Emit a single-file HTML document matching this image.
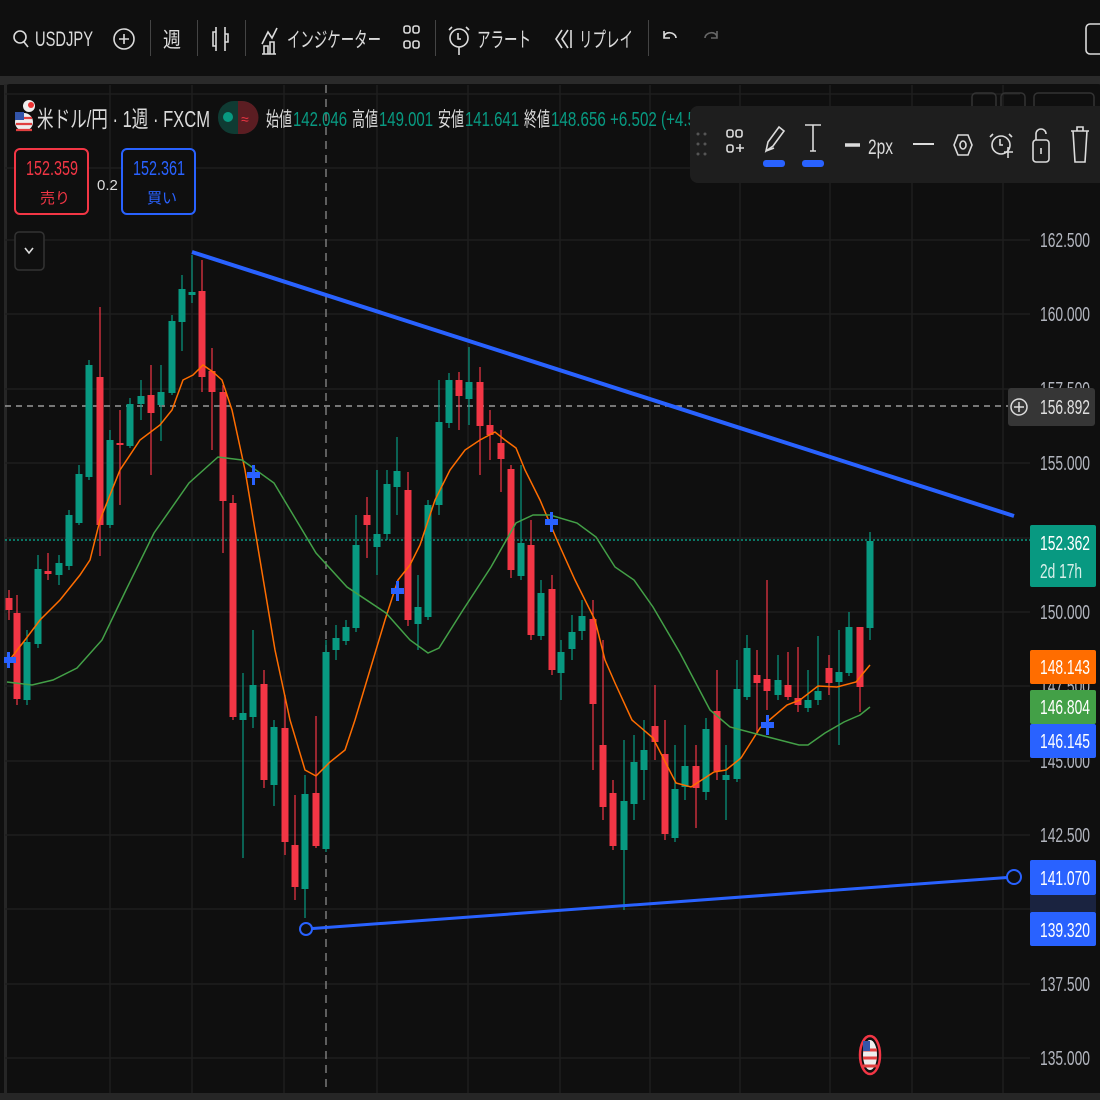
<!DOCTYPE html>
<html><head><meta charset="utf-8"><style>
html,body{margin:0;padding:0;background:#0f0f0f;width:1100px;height:1100px;overflow:hidden}
svg{display:block}
text{font-family:"Liberation Sans","Noto Sans CJK JP",sans-serif}
</style></head><body>
<svg width="1100" height="1100" viewBox="0 0 1100 1100" xmlns="http://www.w3.org/2000/svg">
<rect width="1100" height="1100" fill="#0f0f0f"/>
<!-- top toolbar -->
<g fill="none" stroke="#dbdbdb" stroke-width="1.6">
<circle cx="20" cy="37" r="6"/><path d="M24 42l4 5"/>
<circle cx="124" cy="39" r="10"/><path d="M119 39h10M124 34v10"/>
<path d="M216 27v24M216 32h-3v14h3M225 27v24M225 34h3v8h-3"/>
<path d="M262 54h14M264 54v-8h4v8M270 54v-12h4v12M262 44l6-12 4 6 5-10"/>
<rect x="404" y="26" width="6" height="7" rx="2"/><rect x="413" y="26" width="6" height="7" rx="2"/><rect x="404" y="41" width="6" height="7" rx="2"/><rect x="413" y="41" width="6" height="7" rx="2"/>
<circle cx="459" cy="38" r="9"/><path d="M458 33v6h3M452 27l-3 3M466 27l3 3M459 47v8"/>
<path d="M562 30l-6 9 6 9M568 30l-6 9 6 9M571 30v18"/>
<path d="M676 38c0-6-12-8-12 0M664 31v7h6"/>
<path d="M705 38c0-6 12-8 12 0M717 31v7h-6" stroke="#666"/>
<rect x="1086" y="24" width="20" height="30" rx="4"/>
</g>
<g fill="#444"><rect x="150" y="20" width="1" height="36"/><rect x="197" y="20" width="1" height="36"/><rect x="245" y="20" width="1" height="36"/><rect x="435" y="20" width="1" height="36"/><rect x="648" y="20" width="1" height="36"/></g>
<g fill="#dbdbdb" font-size="21">
<text x="35" y="46" textLength="58" lengthAdjust="spacingAndGlyphs">USDJPY</text>
<text x="163" y="47" textLength="18" lengthAdjust="spacingAndGlyphs">週</text>
<text x="287" y="47" textLength="94" lengthAdjust="spacingAndGlyphs">インジケーター</text>
<text x="477" y="47" textLength="54" lengthAdjust="spacingAndGlyphs">アラート</text>
<text x="579" y="47" textLength="54" lengthAdjust="spacingAndGlyphs">リプレイ</text>
</g>
<!-- band -->
<rect x="0" y="76" width="1100" height="9" fill="#2a2a2a"/>
<rect x="4" y="84" width="1100" height="1010" rx="6" fill="#0f0f0f"/>
<rect x="4" y="84" width="3" height="1010" fill="#262626"/>
<rect x="0" y="1093" width="1100" height="7" fill="#262626"/>
<!-- grid -->
<g stroke="#1e1e1e" stroke-width="1.5">
<path d="M5 94H1020M5 168H1020M5 240H1030M5 314H1030M5 389H1030M5 463H1030M5 538H1030M5 612H1030M5 686H1030M5 761H1030M5 835H1030M5 909H1030M5 984H1030M5 1058H1030"/>
<path d="M110 85V1093M192 85V1093M284 85V1093M377 85V1093M468 85V1093M560 85V1093M650 85V1093M740 85V1093M830 85V1093M912 85V1093M1003 85V1093"/>
</g>
<path d="M326 85V1093" stroke="#8a8a8a" stroke-width="1.3" stroke-dasharray="8,6"/>
<path d="M5 406H1010" stroke="#9a9a9a" stroke-width="1.5" stroke-dasharray="6,5"/>
<path d="M5 540H1030" stroke="#089981" stroke-width="1.5" stroke-dasharray="2,2"/>
<!-- candles -->
<g stroke="#089981" stroke-width="1.2" fill="#089981">
<path d="M27 630V705M38 555V648M59 555V585M69 510V570M79 465V525M89 360V480M110 430V528M130 398V448M141 380V420M161 365V441M172 315V395M182 275V351M192 255V303M243 673V858M253 630V728M274 720V806M305 775V918M326 640V852M336 625V660M346 620V645M356 515V632M377 470V575M387 470V540M397 437V515M418 575V650M428 500V620M439 380V515M449 373V428M469 347V425M521 465V580M541 580V640M561 640V700M572 615V660M582 600V640M624 740V910M634 735V820M644 720V800M675 745V842M685 725V800M706 718V800M726 745V820M737 660V782M747 635V700M778 655V700M808 670V712M818 636V705M839 630V745M849 612V676M870 532V640"/>
<g stroke="none">
<rect x="23.5" y="642" width="7" height="58"/><rect x="34.5" y="569" width="7" height="75"/><rect x="55.5" y="563" width="7" height="12"/><rect x="65.5" y="515" width="7" height="51"/><rect x="75.5" y="474" width="7" height="49"/><rect x="85.5" y="365" width="7" height="112"/><rect x="106.5" y="440" width="7" height="85"/><rect x="126.5" y="404" width="7" height="42"/><rect x="137.5" y="396" width="7" height="8"/><rect x="157.5" y="392" width="7" height="13"/><rect x="168.5" y="321" width="7" height="72"/><rect x="178.5" y="289" width="7" height="33"/><rect x="188.5" y="292" width="7" height="3"/><rect x="239.5" y="713" width="7" height="7"/><rect x="249.5" y="685" width="7" height="32"/><rect x="270.5" y="727" width="7" height="58"/><rect x="301.5" y="794" width="7" height="95"/><rect x="322.5" y="652" width="7" height="197"/><rect x="332.5" y="638" width="7" height="12"/><rect x="342.5" y="627" width="7" height="14"/><rect x="352.5" y="545" width="7" height="83"/><rect x="373.5" y="534" width="7" height="13"/><rect x="383.5" y="484" width="7" height="50"/><rect x="393.5" y="471" width="7" height="16"/><rect x="414.5" y="607" width="7" height="17"/><rect x="424.5" y="505" width="7" height="112"/><rect x="435.5" y="422" width="7" height="83"/><rect x="445.5" y="380" width="7" height="43"/><rect x="465.5" y="382" width="7" height="17"/><rect x="517.5" y="543" width="7" height="33"/><rect x="537.5" y="593" width="7" height="43"/><rect x="557.5" y="652" width="7" height="21"/><rect x="568.5" y="632" width="7" height="17"/><rect x="578.5" y="616" width="7" height="15"/><rect x="620.5" y="801" width="7" height="49"/><rect x="630.5" y="762" width="7" height="42"/><rect x="640.5" y="750" width="7" height="20"/><rect x="671.5" y="789" width="7" height="49"/><rect x="681.5" y="766" width="7" height="21"/><rect x="702.5" y="729" width="7" height="63"/><rect x="722.5" y="775" width="7" height="5"/><rect x="733.5" y="689" width="7" height="90"/><rect x="743.5" y="648" width="7" height="49"/><rect x="774.5" y="680" width="7" height="15"/><rect x="804.5" y="700" width="7" height="8"/><rect x="814.5" y="691" width="7" height="9"/><rect x="835.5" y="672" width="7" height="10"/><rect x="845.5" y="627" width="7" height="46"/><rect x="866.5" y="541" width="7" height="87"/>
</g></g>
<g stroke="#f23645" stroke-width="1.2" fill="#f23645">
<path d="M9 590V620M17 595V705M48 553V580M100 307V556M120 410V505M151 365V475M202 260V392M212 348V450M223 385V553M233 495V720M264 670V788M285 695V855M295 795V900M316 716V848M367 497V558M408 472V626M459 372V430M480 367V475M490 410V460M501 430V492M511 465V578M531 520V640M552 575V675M593 600V770M603 640V820M613 780V850M655 685V760M665 720V840M696 745V828M717 670V780M757 650V735M767 580V710M788 652V700M798 647V712M829 655V695M860 627V712"/>
<g stroke="none">
<rect x="5.5" y="598" width="7" height="12"/><rect x="13.5" y="613" width="7" height="86"/><rect x="44.5" y="571" width="7" height="3"/><rect x="96.5" y="377" width="7" height="148"/><rect x="116.5" y="443" width="7" height="2"/><rect x="147.5" y="395" width="7" height="18"/><rect x="198.5" y="291" width="7" height="86"/><rect x="208.5" y="371" width="7" height="21"/><rect x="219.5" y="392" width="7" height="109"/><rect x="229.5" y="503" width="7" height="214"/><rect x="260.5" y="684" width="7" height="96"/><rect x="281.5" y="728" width="7" height="114"/><rect x="291.5" y="845" width="7" height="42"/><rect x="312.5" y="793" width="7" height="53"/><rect x="363.5" y="515" width="7" height="10"/><rect x="404.5" y="490" width="7" height="130"/><rect x="455.5" y="380" width="7" height="16"/><rect x="476.5" y="382" width="7" height="44"/><rect x="486.5" y="425" width="7" height="10"/><rect x="497.5" y="443" width="7" height="16"/><rect x="507.5" y="469" width="7" height="101"/><rect x="527.5" y="545" width="7" height="90"/><rect x="548.5" y="589" width="7" height="81"/><rect x="589.5" y="619" width="7" height="85"/><rect x="599.5" y="745" width="7" height="62"/><rect x="609.5" y="793" width="7" height="53"/><rect x="651.5" y="726" width="7" height="16"/><rect x="661.5" y="754" width="7" height="80"/><rect x="692.5" y="766" width="7" height="22"/><rect x="713.5" y="711" width="7" height="60"/><rect x="753.5" y="675" width="7" height="8"/><rect x="763.5" y="679" width="7" height="12"/><rect x="784.5" y="685" width="7" height="12"/><rect x="794.5" y="698" width="7" height="7"/><rect x="825.5" y="668" width="7" height="15"/><rect x="856.5" y="627" width="7" height="60"/>
</g></g>
<!-- MAs -->
<polyline fill="none" stroke="#ff6d00" stroke-width="1.5" points="8,662 25,640 40,620 60,600 80,575 90,560 100,520 120,470 140,440 160,425 172,410 183,380 193,375 203,365 213,372 222,380 232,410 245,470 260,560 275,650 290,720 305,770 316,776 330,762 345,750 355,720 370,670 385,620 398,580 410,565 420,545 435,500 450,470 465,450 480,440 495,432 505,440 516,448 525,470 540,500 557,540 575,580 595,620 605,660 615,683 632,720 653,738 676,783 691,787 714,772 726,770 741,758 760,728 787,705 800,700 818,686 837,687 856,682 870,665"/>
<polyline fill="none" stroke="#43a047" stroke-width="1.5" points="7,682 32,685 53,680 77,668 102,640 126,590 154,533 189,483 218,457 242,460 274,483 298,523 316,553 347,587 386,613 410,640 428,653 439,648 463,610 491,567 516,523 533,515 550,515 577,523 596,537 615,567 634,580 653,607 680,653 710,710 730,727 768,737 799,745 808,745 825,733 844,722 860,715 870,707"/>
<!-- blue markers -->
<g fill="#2962ff">
<rect x="4" y="657" width="12" height="6"/><rect x="7" y="652" width="3" height="16"/>
<rect x="247" y="472" width="13" height="6"/><rect x="252" y="465" width="3" height="20"/>
<rect x="391" y="588" width="13" height="6"/><rect x="396" y="581" width="3" height="20"/>
<rect x="545" y="519" width="13" height="6"/><rect x="550" y="512" width="3" height="20"/>
<rect x="761" y="722" width="13" height="6"/><rect x="766" y="715" width="3" height="20"/>
</g>
<!-- trend lines -->
<path d="M192 252L1014 516" stroke="#2962ff" stroke-width="4"/>
<path d="M306 929L1014 877" stroke="#2962ff" stroke-width="3"/>
<circle cx="306" cy="929" r="6" fill="#0f0f0f" stroke="#2962ff" stroke-width="2"/>
<circle cx="1014" cy="877" r="7" fill="#0f0f0f" stroke="#2962ff" stroke-width="2"/>
<!-- axis labels -->
<g fill="#b2b5be" font-size="20">
<text x="1040" y="247" textLength="50" lengthAdjust="spacingAndGlyphs">162.500</text>
<text x="1040" y="321" textLength="50" lengthAdjust="spacingAndGlyphs">160.000</text>
<text x="1040" y="396" textLength="50" lengthAdjust="spacingAndGlyphs">157.500</text>
<text x="1040" y="470" textLength="50" lengthAdjust="spacingAndGlyphs">155.000</text>
<text x="1040" y="619" textLength="50" lengthAdjust="spacingAndGlyphs">150.000</text>
<text x="1040" y="693" textLength="50" lengthAdjust="spacingAndGlyphs">147.500</text>
<text x="1040" y="768" textLength="50" lengthAdjust="spacingAndGlyphs">145.000</text>
<text x="1040" y="842" textLength="50" lengthAdjust="spacingAndGlyphs">142.500</text>
<text x="1040" y="916" textLength="50" lengthAdjust="spacingAndGlyphs">140.000</text>
<text x="1040" y="991" textLength="50" lengthAdjust="spacingAndGlyphs">137.500</text>
<text x="1040" y="1065" textLength="50" lengthAdjust="spacingAndGlyphs">135.000</text>
</g>
<rect x="1008" y="388" width="87" height="38" rx="3" fill="#363636"/>
<circle cx="1019" cy="407" r="8" fill="none" stroke="#ddd" stroke-width="1.5"/><path d="M1014 407h10M1019 402v10" stroke="#ddd" stroke-width="1.5"/>
<rect x="1030" y="525" width="66" height="62" rx="2" fill="#089981"/>
<rect x="1030" y="650" width="66" height="34" rx="2" fill="#ff6d00"/>
<rect x="1030" y="690" width="66" height="34" rx="2" fill="#43a047"/>
<rect x="1030" y="724" width="66" height="34" rx="2" fill="#2962ff"/>
<rect x="1030" y="860" width="66" height="35" rx="2" fill="#2962ff"/>
<rect x="1030" y="895" width="66" height="17" fill="#1a2340"/>
<rect x="1030" y="912" width="66" height="34" rx="2" fill="#2962ff"/>
<g fill="#fff" font-size="20">
<text x="1040" y="414" textLength="50" lengthAdjust="spacingAndGlyphs" fill="#e0e0e0">156.892</text>
<text x="1040" y="550" textLength="50" lengthAdjust="spacingAndGlyphs">152.362</text>
<text x="1040" y="578" textLength="42" lengthAdjust="spacingAndGlyphs" fill="#d8efe9">2d 17h</text>
<text x="1040" y="674" textLength="50" lengthAdjust="spacingAndGlyphs">148.143</text>
<text x="1040" y="714" textLength="50" lengthAdjust="spacingAndGlyphs">146.804</text>
<text x="1040" y="748" textLength="50" lengthAdjust="spacingAndGlyphs">146.145</text>
<text x="1040" y="885" textLength="50" lengthAdjust="spacingAndGlyphs">141.070</text>
<text x="1040" y="937" textLength="50" lengthAdjust="spacingAndGlyphs">139.320</text>
</g>
<!-- flag event -->
<ellipse cx="870" cy="1055" rx="10" ry="19" fill="none" stroke="#f23645" stroke-width="2.5"/>
<ellipse cx="870" cy="1055" rx="7" ry="15" fill="#eee"/>
<path d="M863 1050h14M863 1058h14M863 1066h14" stroke="#e04040" stroke-width="3"/>
<rect x="863" y="1041" width="7" height="10" fill="#3355aa"/>
<!-- legend -->
<circle cx="24" cy="122" r="9" fill="#eee"/><path d="M16 118h16M16 124h16M16 130h16" stroke="#e04040" stroke-width="2.2"/><rect x="15" y="112" width="9" height="8" fill="#3355aa"/>
<circle cx="29" cy="106" r="6" fill="#eee"/><circle cx="31" cy="105" r="3" fill="#e33"/>
<text x="37" y="127" font-size="23" fill="#dbdbdb" textLength="173" lengthAdjust="spacingAndGlyphs">米ドル/円 · 1週 · FXCM</text>
<rect x="218" y="101" width="40" height="33" rx="16" fill="#0f3b33"/>
<path d="M238 101h4a16 16 0 0 1 0 33h-4z" fill="#5b1d22"/>
<circle cx="228" cy="117" r="5" fill="#089981"/>
<text x="241" y="124" font-size="14" fill="#f23645">≈</text>
<g font-size="20">
<text x="266" y="126" fill="#dbdbdb" textLength="26" lengthAdjust="spacingAndGlyphs">始値</text>
<text x="293" y="126" fill="#089981" textLength="54" lengthAdjust="spacingAndGlyphs">142.046</text>
<text x="352" y="126" fill="#dbdbdb" textLength="26" lengthAdjust="spacingAndGlyphs">高値</text>
<text x="379" y="126" fill="#089981" textLength="54" lengthAdjust="spacingAndGlyphs">149.001</text>
<text x="438" y="126" fill="#dbdbdb" textLength="26" lengthAdjust="spacingAndGlyphs">安値</text>
<text x="465" y="126" fill="#089981" textLength="54" lengthAdjust="spacingAndGlyphs">141.641</text>
<text x="524" y="126" fill="#dbdbdb" textLength="26" lengthAdjust="spacingAndGlyphs">終値</text>
<text x="551" y="126" fill="#089981" textLength="145" lengthAdjust="spacingAndGlyphs">148.656 +6.502 (+4.5</text>
</g>
<!-- top-right small buttons -->
<g fill="none" stroke="#333" stroke-width="1.5"><rect x="972" y="93" width="24" height="22" rx="4"/><rect x="1001" y="93" width="24" height="22" rx="4"/><rect x="1034" y="93" width="60" height="22" rx="4"/></g>
<!-- sell / buy -->
<rect x="15" y="149" width="73" height="65" rx="5" fill="#0f0f0f" stroke="#f23645" stroke-width="2"/>
<rect x="122" y="149" width="73" height="65" rx="5" fill="#0f0f0f" stroke="#2962ff" stroke-width="2"/>
<text x="26" y="175" font-size="20" fill="#f23645" textLength="52" lengthAdjust="spacingAndGlyphs">152.359</text>
<text x="40" y="203" font-size="15" fill="#f23645">売り</text>
<text x="133" y="175" font-size="20" fill="#2962ff" textLength="52" lengthAdjust="spacingAndGlyphs">152.361</text>
<text x="147" y="203" font-size="15" fill="#2962ff">買い</text>
<text x="97" y="190" font-size="15" fill="#dbdbdb">0.2</text>
<rect x="15" y="232" width="29" height="38" rx="4" fill="#0f0f0f" stroke="#333" stroke-width="1.5"/>
<path d="M25 248l4 5 4-5" fill="none" stroke="#ddd" stroke-width="1.6"/>
<!-- floating drawing toolbar -->
<rect x="690" y="106" width="420" height="77" rx="8" fill="#1e1e1e"/>
<g fill="#555"><circle cx="698" cy="134" r="1.5"/><circle cx="705" cy="134" r="1.5"/><circle cx="698" cy="144" r="1.5"/><circle cx="705" cy="144" r="1.5"/><circle cx="698" cy="154" r="1.5"/><circle cx="705" cy="154" r="1.5"/></g>
<g fill="none" stroke="#dbdbdb" stroke-width="1.6">
<rect x="727" y="130" width="6" height="7" rx="2"/><rect x="736" y="130" width="6" height="7" rx="2"/><rect x="727" y="145" width="6" height="7" rx="2"/><path d="M736 148h8M740 144v8"/>
<path d="M766 151l2-9 11-15 5 4-11 15zM766 151l8-3"/>
<path d="M805 125h16M813 125v26M810 151h6"/>
<path d="M845 145h15" stroke-width="3.5"/>
<path d="M913 144h21" stroke-width="2"/>
<path d="M954 145l4-10h10l4 10-4 10h-10z"/><ellipse cx="963" cy="145" rx="3" ry="4"/>
<circle cx="1001" cy="145" r="9"/><path d="M1000 139v6h3M993 134l-3 3M1009 134l3 3M1004 152h9M1008 147v11"/>
<rect x="1033" y="140" width="16" height="22" rx="3"/><path d="M1036 140v-6a5 5 0 0 1 10 0M1041 148v6"/>
<path d="M1071 131h18M1077 131v-4h6v4M1073 131l2 31h10l2-31"/>
</g>
<rect x="763" y="160" width="22" height="7" rx="3" fill="#2962ff"/>
<rect x="802" y="160" width="22" height="7" rx="3" fill="#2962ff"/>
<text x="868" y="154" font-size="21" fill="#dbdbdb" textLength="25" lengthAdjust="spacingAndGlyphs">2px</text>
</svg>
</body></html>
